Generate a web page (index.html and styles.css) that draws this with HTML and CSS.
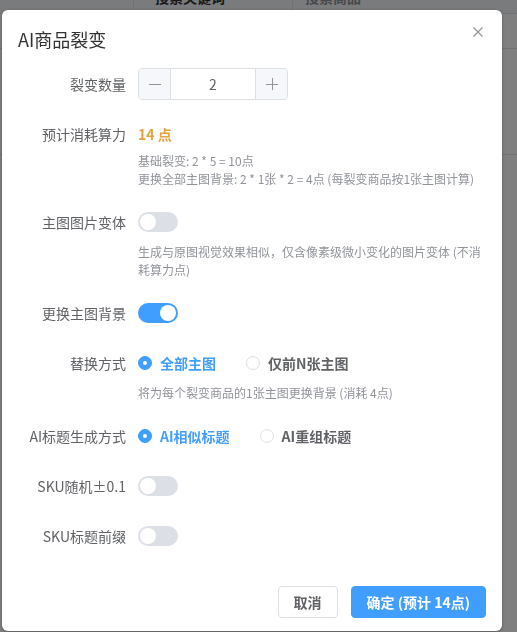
FILE: index.html
```html
<!DOCTYPE html>
<html lang="zh-CN">
<head>
    <meta charset="UTF-8">
    <meta name="viewport" content="width=device-width, initial-scale=1.0">
    <title>AI商品裂变</title>
    <link rel="stylesheet" href="styles.css">
</head>
<body>
    <div class="page">
        <div class="table-head">
            <div class="th th-first"></div>
            <div class="th th-key">搜索关键词</div>
            <div class="th th-goods">搜索商品</div>
        </div>
        <div class="table-row"></div>
        <div class="table-row table-row-tall"></div>
    </div>

    <div class="modal-mask"></div>

    <div class="dialog">
        <div class="dialog-header">
            <span class="dialog-title">AI商品裂变</span>
            <button class="dialog-close" aria-label="关闭">
                <svg width="10" height="10" viewBox="0 0 10 10">
                    <path d="M0.5 0.5 L9.5 9.5 M9.5 0.5 L0.5 9.5" stroke="#909399" stroke-width="1.1" fill="none"/>
                </svg>
            </button>
        </div>

        <div class="dialog-body">
            <div class="form-item">
                <label class="form-label">裂变数量</label>
                <div class="form-content">
                    <div class="input-number">
                        <span class="num-btn num-minus">
                            <svg width="12" height="12" viewBox="0 0 12 12"><path d="M0 6.5 H12" stroke="#909399" stroke-width="1"/></svg>
                        </span>
                        <span class="num-value">2</span>
                        <span class="num-btn num-plus">
                            <svg width="12" height="12" viewBox="0 0 12 12"><path d="M0 6.5 H12 M6.5 0 V12" stroke="#909399" stroke-width="1"/></svg>
                        </span>
                    </div>
                </div>
            </div>

            <div class="form-item">
                <label class="form-label">预计消耗算力</label>
                <div class="form-content">
                    <div class="cost">14 点</div>
                    <div class="hint hint-cost">
                        基础裂变: 2 * 5 = 10点<br>
                        更换全部主图背景: 2 * 1张 * 2 = 4点 (每裂变商品按1张主图计算)
                    </div>
                </div>
            </div>

            <div class="form-item">
                <label class="form-label">主图图片变体</label>
                <div class="form-content">
                    <div class="switch-line"><span class="switch"></span></div>
                    <div class="hint">生成与原图视觉效果相似，仅含像素级微小变化的图片变体 (不消耗算力点)</div>
                </div>
            </div>

            <div class="form-item">
                <label class="form-label">更换主图背景</label>
                <div class="form-content">
                    <div class="switch-line"><span class="switch is-on"></span></div>
                </div>
            </div>

            <div class="form-item">
                <label class="form-label">替换方式</label>
                <div class="form-content">
                    <div class="radio-group">
                        <span class="radio is-checked"><span class="radio-dot"></span><span class="radio-label">全部主图</span></span>
                        <span class="radio"><span class="radio-dot"></span><span class="radio-label">仅前N张主图</span></span>
                    </div>
                    <div class="hint">将为每个裂变商品的1张主图更换背景 (消耗 4点)</div>
                </div>
            </div>

            <div class="form-item">
                <label class="form-label">AI标题生成方式</label>
                <div class="form-content">
                    <div class="radio-group">
                        <span class="radio is-checked"><span class="radio-dot"></span><span class="radio-label">AI相似标题</span></span>
                        <span class="radio"><span class="radio-dot"></span><span class="radio-label">AI重组标题</span></span>
                    </div>
                </div>
            </div>

            <div class="form-item">
                <label class="form-label">SKU随机±0.1</label>
                <div class="form-content">
                    <div class="switch-line"><span class="switch"></span></div>
                </div>
            </div>

            <div class="form-item">
                <label class="form-label">SKU标题前缀</label>
                <div class="form-content">
                    <div class="switch-line"><span class="switch"></span></div>
                </div>
            </div>
        </div>

        <div class="dialog-footer">
            <button class="btn">取消</button>
            <button class="btn btn-primary">确定 (预计 14点)</button>
        </div>
    </div>
</body>
</html>
```

FILE: styles.css
```css
* {
    box-sizing: border-box;
}

body {
    margin: 0;
    font-family: "Noto Sans CJK SC", "Noto Sans", sans-serif;
    background-color: #fff;
    color: #606266;
    height: 632px;
    overflow: hidden;
}

/* page behind the mask */
.page {
    margin-top: -20px;
}

.table-head {
    display: flex;
    height: 34px;
    border-bottom: 1px solid #e4e4e4;
    background-color: #f5f7fa;
}

.th {
    font-size: 14px;
    font-weight: 700;
    line-height: 34px;
    height: 100%;
}

.th-first {
    width: 134px;
    border-right: 1px solid #e4e4e4;
}

.th-key {
    width: 159px;
    padding-left: 21px;
    color: #303133;
    border-right: 1px solid #e4e4e4;
}

.th-goods {
    padding-left: 12px;
    color: #909399;
}

.table-row {
    height: 35px;
    border-bottom: 1px solid #e4e4e4;
}

.table-row-tall {
    height: 106px;
}

.modal-mask {
    position: fixed;
    inset: 0;
    background-color: rgba(0, 0, 0, 0.5);
}

/* dialog */
.dialog {
    position: absolute;
    left: 2px;
    top: 10px;
    width: 500px;
    height: 621px;
    background-color: #fff;
    border-radius: 6px;
    box-shadow: 0 1px 3px rgba(0, 0, 0, 0.3);
    display: flex;
    flex-direction: column;
}

.dialog-header {
    position: relative;
    padding: 17px 16px 0;
}

.dialog-title {
    font-size: 18px;
    line-height: 24px;
    color: #303133;
}

.dialog-close {
    position: absolute;
    top: 17px;
    right: 19px;
    width: 10px;
    height: 10px;
    padding: 0;
    border: none;
    background: none;
    display: flex;
}

.dialog-body {
    padding: 16px 16px 0;
}

.form-item {
    display: flex;
    margin-bottom: 18px;
}

.form-label {
    width: 120px;
    flex-shrink: 0;
    padding-right: 12px;
    text-align: right;
    font-size: 14px;
    line-height: 32px;
    color: #606266;
}

.form-content {
    flex: 1;
    font-size: 14px;
    line-height: 32px;
}

/* input number */
.input-number {
    display: flex;
    width: 150px;
    height: 32px;
    border: 1px solid #dcdfe6;
    border-radius: 4px;
    overflow: hidden;
}

.num-btn {
    width: 32px;
    display: flex;
    align-items: center;
    justify-content: center;
    background-color: #f5f7fa;
}

.num-minus {
    border-right: 1px solid #dcdfe6;
}

.num-plus {
    border-left: 1px solid #dcdfe6;
}

.num-value {
    flex: 1;
    text-align: center;
    line-height: 30px;
    color: #606266;
}

.cost {
    color: #e6a23c;
    font-weight: 700;
}

.hint {
    margin-top: 5px;
    font-size: 12px;
    line-height: 18px;
    color: #909399;
}

.hint-cost {
    margin-top: 2px;
}

/* switch */
.switch-line {
    height: 32px;
    display: flex;
    align-items: center;
}

.switch {
    position: relative;
    width: 40px;
    height: 20px;
    border-radius: 10px;
    background-color: #dcdfe6;
}

.switch::after {
    content: "";
    position: absolute;
    top: 2px;
    left: 2px;
    width: 16px;
    height: 16px;
    border-radius: 50%;
    background-color: #fff;
}

.switch.is-on {
    background-color: #409eff;
}

.switch.is-on::after {
    left: 22px;
}

/* radio */
.radio-group {
    display: flex;
    align-items: center;
    height: 32px;
}

.radio {
    display: flex;
    align-items: center;
    margin-right: 30px;
}

.radio-dot {
    position: relative;
    width: 14px;
    height: 14px;
    border: 1px solid #dcdfe6;
    border-radius: 50%;
    background-color: #fff;
}

.radio.is-checked .radio-dot {
    border-color: #409eff;
    background-color: #409eff;
}

.radio.is-checked .radio-dot::after {
    content: "";
    position: absolute;
    top: 4px;
    left: 4px;
    width: 4px;
    height: 4px;
    border-radius: 50%;
    background-color: #fff;
}

.radio-label {
    padding-left: 8px;
    font-weight: 700;
    color: #606266;
}

.radio.is-checked .radio-label {
    color: #409eff;
}

/* footer */
.dialog-footer {
    margin-top: auto;
    display: flex;
    justify-content: flex-end;
    gap: 13px;
    padding: 0 16px 13px;
}

.btn {
    height: 32px;
    padding: 0 15px;
    font-family: inherit;
    font-size: 14px;
    font-weight: 700;
    color: #606266;
    background-color: #fff;
    border: 1px solid #dcdfe6;
    border-radius: 4px;
}

.btn-primary {
    color: #fff;
    background-color: #409eff;
    border-color: #409eff;
}
```
